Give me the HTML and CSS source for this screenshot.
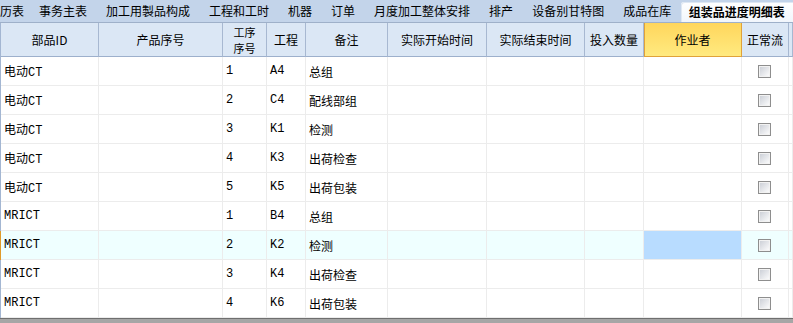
FILE: index.html
```html
<!DOCTYPE html>
<html lang="zh-CN">

<head>
    <meta charset="UTF-8">
    <title>组装品进度明细表</title>
    <link rel="stylesheet" href="styles.css">
</head>

<body>
    <!-- tab strip -->
    <div class="tabs">
        <div class="tab">历表</div>
        <div class="tab">事务主表</div>
        <div class="tab">加工用製品构成</div>
        <div class="tab">工程和工时</div>
        <div class="tab">机器</div>
        <div class="tab">订单</div>
        <div class="tab">月度加工整体安排</div>
        <div class="tab">排产</div>
        <div class="tab">设备别甘特图</div>
        <div class="tab">成品在库</div>
        <div class="tab active">组装品进度明细表</div>
    </div>

    <div class="grid">
        <div class="row head">
            <div class="cell">部品ID</div>
            <div class="cell">产品序号</div>
            <div class="cell two-line">工序<br>序号</div>
            <div class="cell">工程</div>
            <div class="cell">备注</div>
            <div class="cell">实际开始时间</div>
            <div class="cell">实际结束时间</div>
            <div class="cell">投入数量</div>
            <div class="cell sorted">作业者</div>
            <div class="cell">正常流</div>
            <div class="cell"></div>
        </div>

        <div class="row">
            <div class="cell">电动CT</div><div class="cell"></div>
            <div class="cell">1</div><div class="cell">A4</div>
            <div class="cell note">总组</div>
            <div class="cell"></div><div class="cell"></div><div class="cell"></div><div class="cell"></div>
            <div class="cell center"><span class="check"></span></div><div class="cell"></div>
        </div>
        <div class="row">
            <div class="cell">电动CT</div><div class="cell"></div>
            <div class="cell">2</div><div class="cell">C4</div>
            <div class="cell note">配线部组</div>
            <div class="cell"></div><div class="cell"></div><div class="cell"></div><div class="cell"></div>
            <div class="cell center"><span class="check"></span></div><div class="cell"></div>
        </div>
        <div class="row">
            <div class="cell">电动CT</div><div class="cell"></div>
            <div class="cell">3</div><div class="cell">K1</div>
            <div class="cell note">检测</div>
            <div class="cell"></div><div class="cell"></div><div class="cell"></div><div class="cell"></div>
            <div class="cell center"><span class="check"></span></div><div class="cell"></div>
        </div>
        <div class="row">
            <div class="cell">电动CT</div><div class="cell"></div>
            <div class="cell">4</div><div class="cell">K3</div>
            <div class="cell note">出荷检查</div>
            <div class="cell"></div><div class="cell"></div><div class="cell"></div><div class="cell"></div>
            <div class="cell center"><span class="check"></span></div><div class="cell"></div>
        </div>
        <div class="row">
            <div class="cell">电动CT</div><div class="cell"></div>
            <div class="cell">5</div><div class="cell">K5</div>
            <div class="cell note">出荷包装</div>
            <div class="cell"></div><div class="cell"></div><div class="cell"></div><div class="cell"></div>
            <div class="cell center"><span class="check"></span></div><div class="cell"></div>
        </div>
        <div class="row">
            <div class="cell">MRICT</div><div class="cell"></div>
            <div class="cell">1</div><div class="cell">B4</div>
            <div class="cell note">总组</div>
            <div class="cell"></div><div class="cell"></div><div class="cell"></div><div class="cell"></div>
            <div class="cell center"><span class="check"></span></div><div class="cell"></div>
        </div>
        <!-- current row -->
        <div class="row current">
            <div class="cell">MRICT</div><div class="cell"></div>
            <div class="cell">2</div><div class="cell">K2</div>
            <div class="cell note">检测</div>
            <div class="cell"></div><div class="cell"></div><div class="cell"></div>
            <div class="cell focused"></div>
            <div class="cell center"><span class="check"></span></div><div class="cell"></div>
        </div>
        <div class="row">
            <div class="cell">MRICT</div><div class="cell"></div>
            <div class="cell">3</div><div class="cell">K4</div>
            <div class="cell note">出荷检查</div>
            <div class="cell"></div><div class="cell"></div><div class="cell"></div><div class="cell"></div>
            <div class="cell center"><span class="check"></span></div><div class="cell"></div>
        </div>
        <div class="row">
            <div class="cell">MRICT</div><div class="cell"></div>
            <div class="cell">4</div><div class="cell">K6</div>
            <div class="cell note">出荷包装</div>
            <div class="cell"></div><div class="cell"></div><div class="cell"></div><div class="cell"></div>
            <div class="cell center"><span class="check"></span></div><div class="cell"></div>
        </div>
    </div>

    <div class="footer"></div>
</body>

</html>
```

FILE: styles.css
```css
body {
    margin: 0;
    padding: 0;
    width: 793px;
    height: 323px;
    overflow: hidden;
    background-color: #fff;
    font-family: "Noto Sans CJK SC", sans-serif;
    font-size: 12px;
    color: #000;
}

/* tab strip */
.tabs {
    display: flex;
    height: 22px;
    line-height: 22px;
    background-color: #c3d4ea;
    border-bottom: 1px solid #9eb0c9;
    overflow: hidden;
    white-space: nowrap;
}

.tab {
    padding: 0 9.5px;
    flex-shrink: 0;
}

/* first tab is scrolled to the left edge */
.tab:first-child {
    padding-left: 0;
    padding-right: 5.5px;
}

.tab.active {
    flex-grow: 1;
    margin-top: 2px;
    line-height: 20px;
    padding-left: 8px;
    font-weight: bold;
    background: linear-gradient(#ffffff, #f1f6fc);
    border-top-left-radius: 3px;
    box-shadow: inset 1px 1px 0 #dfe8f3;
}

/* grid */
.row {
    display: grid;
    grid-template-columns: 98px 124px 44px 39px 82px 99px 98px 59px 98px 47px 1fr;
    height: 29px;
    border-left: 1px solid #a3b6d2;
}

.cell {
    box-sizing: border-box;
    display: flex;
    align-items: center;
    padding-left: 3px;
    border-right: 1px solid #ececec;
    border-bottom: 1px solid #ececec;
    font-family: "Liberation Mono", "Noto Sans CJK SC", monospace;
    white-space: nowrap;
    overflow: hidden;
}

.cell.note {
    font-family: "Noto Sans CJK SC", sans-serif;
}

.cell.center {
    justify-content: center;
    padding-left: 0;
}

.head {
    height: 34px;
    background-color: #dbe7f5;
}

.head .cell {
    justify-content: center;
    padding-left: 0;
    text-align: center;
    font-family: "Noto Sans CJK SC", sans-serif;
    border-right-color: #a7b8d1;
    border-bottom-color: #9db0cc;
}

.head .two-line {
    font-size: 11px;
    line-height: 16px;
}

.head .sorted {
    background: linear-gradient(#ffd65c, #ffea80);
    border-right-color: #e0a23a;
    border-bottom-color: #e0a23a;
    box-shadow: inset 1px 0 0 #e0a23a;
}

.current {
    background-color: #efffff;
    border-left-color: #e09a2a;
}

.focused {
    background-color: #b8dcff;
}

.check {
    display: block;
    box-sizing: border-box;
    width: 13px;
    height: 13px;
    margin-left: -2px;
    border: 1px solid #8e8e8e;
    background: linear-gradient(135deg, #c8ccd4, #ffffff);
    box-shadow: inset 0 0 0 1px #f2f2f2;
}

.footer {
    height: 5px;
    border-top: 1px solid #6f6f6f;
    background-color: #a6a6a6;
}
```
